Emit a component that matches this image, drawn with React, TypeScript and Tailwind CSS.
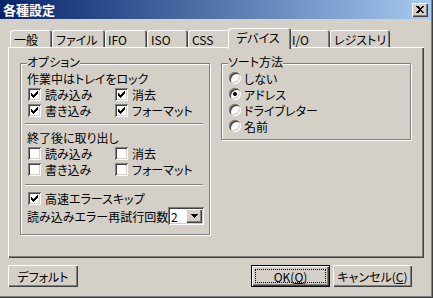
import React from "react";

const font = "font-['Noto_Sans_CJK_JP',sans-serif] [font-feature-settings:'palt']";

const tabs = [
  { label: "一般", cls: "w-[42px] pl-[4px]" },
  { label: "ファイル", cls: "w-[53px] pl-[4px]" },
  { label: "IFO", cls: "w-[42px] pl-[3px]" },
  { label: "ISO", cls: "w-[41px] pl-[4px]" },
  { label: "CSS", cls: "w-[42px] pl-[4px]" },
  { label: "デバイス", cls: "w-[63px] pl-[8px]", active: true },
  { label: "I/O", cls: "w-[41px] pl-[3px]" },
  { label: "レジストリ", cls: "w-[60px] pl-[4px]" },
];

function Check({ checked }: { checked?: boolean }) {
  return (
    <span className="relative inline-block h-[13px] w-[13px] shrink-0 bg-white shadow-[inset_1px_1px_#808080,inset_-1px_-1px_#ffffff,inset_2px_2px_#404040,inset_-2px_-2px_#d4d0c8]">
      {checked && (
        <svg width="13" height="13" viewBox="0 0 13 13" className="absolute left-0 top-0" shapeRendering="crispEdges">
          <path
            d="M3 5h1v1h-1zM3 6h2v1h-2zM3 7h3v1h-3zM4 8h3v1h-3zM5 9h1v1h-1zM9 3h1v1h-1zM8 4h2v1h-2zM7 5h3v1h-3zM6 6h3v1h-3zM5 7h3v1h-3zM5 8h2v1h-2z"
            fill="#000"
          />
        </svg>
      )}
    </span>
  );
}

function Radio({ checked }: { checked?: boolean }) {
  return (
    <span className="relative inline-flex h-[12px] w-[12px] shrink-0 items-center justify-center rounded-full bg-white shadow-[inset_1px_1px_#808080,inset_-1px_-1px_#ffffff,inset_2px_2px_#404040,inset_-2px_-2px_#d4d0c8]">
      {checked && <span className="h-[4px] w-[4px] rounded-full bg-black" />}
    </span>
  );
}

function CheckRow({ label, checked, cls }: { label: string; checked?: boolean; cls: string }) {
  return (
    <div className={`flex items-center gap-[4px] ${cls}`}>
      <Check checked={checked} />
      <span className="whitespace-nowrap">{label}</span>
    </div>
  );
}

function Etched() {
  return <div className="mx-[2px] h-[2px] border-t border-b border-t-[#808080] border-b-white" />;
}

function Group({ title, className, children }: { title: string; className: string; children: React.ReactNode }) {
  return (
    <div className={`relative border border-[#808080] shadow-[inset_1px_1px_#ffffff,1px_1px_#ffffff] ${className}`}>
      <span className="absolute -top-[8px] left-[6px] h-[12px] bg-[#d4d0c8] leading-[12px]">{title}</span>
      {children}
    </div>
  );
}

function Button({ children, cls, isDefault }: { children: React.ReactNode; cls: string; isDefault?: boolean }) {
  if (isDefault) {
    return (
      <div className={`flex h-[22px] border border-black ${cls}`}>
        <div className="flex flex-1 items-center justify-center p-[3px] shadow-[inset_1px_1px_#ffffff,inset_-1px_-1px_#404040,inset_-2px_-2px_#808080]">
          <div className="flex h-full w-full items-center justify-center border border-dotted border-black">{children}</div>
        </div>
      </div>
    );
  }
  return (
    <div
      className={`flex h-[22px] items-center justify-center shadow-[inset_1px_1px_#ffffff,inset_-1px_-1px_#404040,inset_-2px_-2px_#808080] ${cls}`}
    >
      {children}
    </div>
  );
}

export default function App() {
  return (
    <div
      className={`h-[298px] w-[433px] overflow-hidden bg-[#d4d0c8] text-[12px] leading-[13px] text-black shadow-[inset_-1px_-1px_#404040,inset_-2px_-2px_#808080] ${font}`}
    >
      {/* Title bar */}
      <div className="flex h-[19px] w-[431px] items-center bg-gradient-to-r from-[#0a246a] to-[#a6caf0] pl-[3px] pr-[3px]">
        <span className="text-[13px] font-bold text-white">各種設定</span>
        <div className="ml-auto flex h-[14px] w-[16px] items-center justify-center bg-[#d4d0c8] shadow-[inset_1px_1px_#ffffff,inset_-1px_-1px_#404040,inset_-2px_-2px_#808080]">
          <svg width="8" height="7" viewBox="0 0 8 7" shapeRendering="crispEdges">
            <path d="M0 0h2l2 2 2-2h2l-3 3.5 3 3.5h-2l-2-2-2 2h-2l3-3.5z" fill="#000" />
          </svg>
        </div>
      </div>

      {/* Tabs */}
      <div className="mt-[9px] flex h-[19px] pl-[10px]">
        {tabs.map((t) =>
          t.active ? (
            <div
              key={t.label}
              className={`relative z-10 -mx-[2px] flex h-[21px] items-center rounded-t-[3px] bg-[#d4d0c8] pb-[2px] shadow-[inset_1px_1px_#ffffff,inset_-1px_0_#404040,inset_-2px_0_#808080] ${t.cls}`}
            >
              {t.label}
            </div>
          ) : (
            <div
              key={t.label}
              className={`mt-[2px] flex h-[17px] items-center rounded-t-[3px] pt-[1px] shadow-[inset_1px_1px_#ffffff,inset_-1px_0_#404040,inset_-2px_0_#808080] ${t.cls}`}
            >
              {t.label}
            </div>
          )
        )}
      </div>

      {/* Panel */}
      <div className="ml-[8px] flex h-[211px] w-[416px] items-start pl-[12px] pt-[16px] shadow-[inset_1px_1px_#ffffff,inset_-1px_-1px_#404040,inset_-2px_-2px_#808080]">
        <Group title="オプション" className="h-[172px] w-[190px] pl-[6px] pr-[4px] pt-[6px]">
          <div className="flex h-[16px] items-center whitespace-nowrap">作業中はトレイをロック</div>
          <div className="flex h-[16px] pl-[1px]">
            <CheckRow label="読み込み" checked cls="w-[87px]" />
            <CheckRow label="消去" checked cls="" />
          </div>
          <div className="flex h-[16px] pl-[1px]">
            <CheckRow label="書き込み" checked cls="w-[87px]" />
            <CheckRow label="フォーマット" checked cls="" />
          </div>
          <div className="mb-[5px] mt-[5px] -ml-[4px]">
            <Etched />
          </div>
          <div className="flex h-[15px] items-center whitespace-nowrap">終了後に取り出し</div>
          <div className="flex h-[16px] pl-[1px]">
            <CheckRow label="読み込み" cls="w-[87px]" />
            <CheckRow label="消去" cls="" />
          </div>
          <div className="flex h-[16px] pl-[1px]">
            <CheckRow label="書き込み" cls="w-[87px]" />
            <CheckRow label="フォーマット" cls="" />
          </div>
          <div className="mb-[4px] mt-[7px] -ml-[4px]">
            <Etched />
          </div>
          <div className="flex h-[16px] pl-[1px]">
            <CheckRow label="高速エラースキップ" checked cls="" />
          </div>
          <div className="flex h-[20px] items-center">
            <span className="w-[141px] whitespace-nowrap">読み込みエラー再試行回数</span>
            <div className="flex h-[18px] w-[36px] bg-white p-[2px] shadow-[inset_1px_1px_#808080,inset_-1px_-1px_#ffffff,inset_2px_2px_#404040,inset_-2px_-2px_#d4d0c8]">
              <span className="flex flex-1 items-center pl-[1px]">2</span>
              <div className="flex w-[16px] items-center justify-center bg-[#d4d0c8] shadow-[inset_1px_1px_#ffffff,inset_-1px_-1px_#404040,inset_-2px_-2px_#808080]">
                <svg width="7" height="4" viewBox="0 0 7 4" shapeRendering="crispEdges">
                  <path d="M0 0h7v1h-1v1h-1v1h-1v1h-1v-1h-1v-1h-1v-1h-1z" fill="#000" />
                </svg>
              </div>
            </div>
          </div>
        </Group>

        <Group title="ソート方法" className="ml-[11px] h-[77px] w-[190px] pl-[7px] pt-[6px]">
          {[
            { label: "しない" },
            { label: "アドレス", checked: true },
            { label: "ドライブレター" },
            { label: "名前" },
          ].map((r) => (
            <div key={r.label} className="flex h-[16px] items-center gap-[3px]">
              <Radio checked={r.checked} />
              <span className="whitespace-nowrap">{r.label}</span>
            </div>
          ))}
        </Group>
      </div>

      {/* Buttons */}
      <div className="mt-[7px] flex pl-[8px] pr-[21px]">
        <Button cls="w-[70px]">デフォルト</Button>
        <div className="ml-auto flex gap-[3px]">
          <Button cls="w-[79px]" isDefault>
            <span>
              OK(<span className="underline">O</span>)
            </span>
          </Button>
          <Button cls="w-[79px]">
            <span>
              キャンセル(<span className="underline">C</span>)
            </span>
          </Button>
        </div>
      </div>
    </div>
  );
}
